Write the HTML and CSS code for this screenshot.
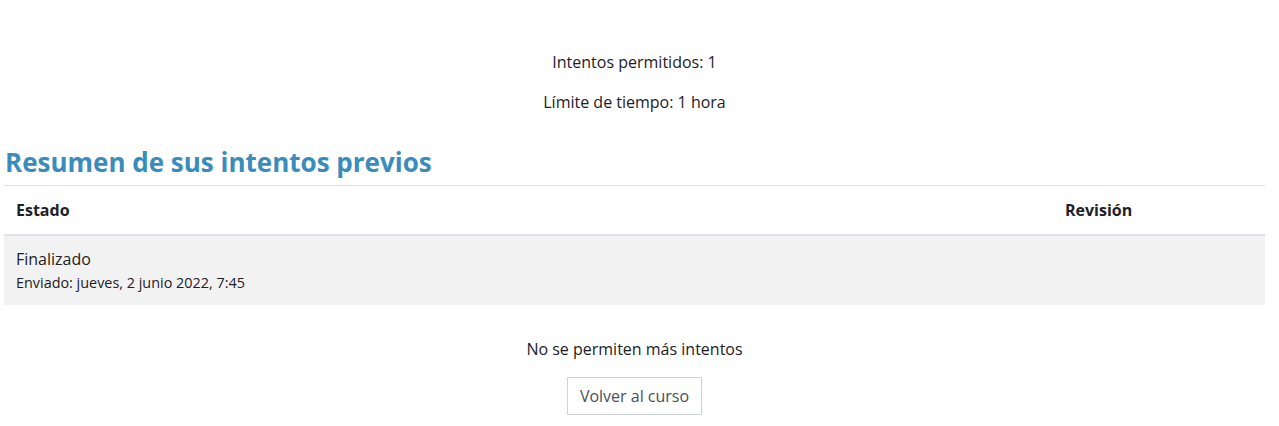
FILE: index.html
```html
<!DOCTYPE html>
<html lang="es">
<head>
<meta charset="utf-8">
<link rel="stylesheet" href="styles.css">
</head>
<body>
<div class="page">
  <div class="quizinfo">
    <p>Intentos permitidos: 1</p>
    <p>Límite de tiempo: 1 hora</p>
  </div>
  <h3 class="summary-title">Resumen de sus intentos previos</h3>
  <table class="attempts">
    <thead>
      <tr><th class="c-state">Estado</th><th class="c-review">Revisión</th></tr>
    </thead>
    <tbody>
      <tr>
        <td class="c-state">Finalizado<span class="state-detail">Enviado: jueves, 2 junio 2022, 7:45</span></td>
        <td class="c-review"></td>
      </tr>
    </tbody>
  </table>
  <div class="quizattempt">
    <p>No se permiten más intentos</p>
    <button class="btn" type="button">Volver al curso</button>
  </div>
</div>
</body>
</html>
```
FILE: styles.css
```css
html, body {
  margin: 0;
  padding: 0;
  background: #fff;
}
body {
  font-family: "Open Sans", "Liberation Sans", sans-serif;
  font-size: 16px;
  line-height: 1.5;
  color: #1d2125;
}
.page {
  width: 1261px;
  padding: 50px 0 0 4px;
}
.quizinfo {
  text-align: center;
}
.quizinfo p {
  margin: 0 0 16px;
  line-height: 24px;
}
.summary-title {
  margin: 0;
  padding: 16px 0 7px 1px;
  font-size: 26px;
  line-height: 32px;
  font-weight: 700;
  color: #3a8cbc;
}
.attempts {
  width: 100%;
  border-collapse: collapse;
  margin: 0;
}
.attempts th,
.attempts td {
  text-align: left;
  vertical-align: top;
  padding: 12px;
  border-top: 1px solid #dee2e6;
}
.attempts th {
  font-weight: 700;
  line-height: 24px;
  border-bottom: 2px solid #dee2e6;
}
.attempts th.c-state {
  width: 1025px;
}
.attempts tbody td {
  background: #f2f2f2;
  border-top: none;
  padding: 11px 12px 11px;
  line-height: 24px;
}
.state-detail {
  display: block;
  font-size: 14.4px;
  line-height: 23px;
}
.quizattempt {
  text-align: center;
  padding-top: 32px;
}
.quizattempt p {
  margin: 0 0 16px;
  line-height: 24px;
}
.btn {
  font-family: inherit;
  font-size: 16px;
  line-height: 24px;
  color: #495057;
  background: #fff;
  border: 1px solid #ced4da;
  border-radius: 0;
  padding: 6px 12px;
  cursor: pointer;
}
```
